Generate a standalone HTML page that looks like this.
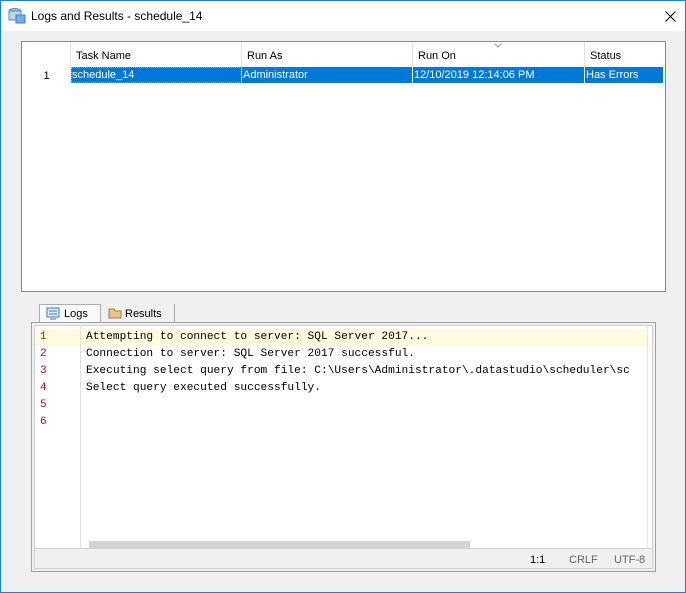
<!DOCTYPE html>
<html><head><style>
*{margin:0;padding:0;box-sizing:border-box}
body{width:686px;height:593px;background:#f0f0f0;font-family:"Liberation Sans",sans-serif;font-size:11px;position:relative;overflow:hidden}
.win{position:absolute;left:0;top:0;width:686px;height:593px;border:1px solid #1883d7;background:#f0f0f0}
.title{position:absolute;left:0;top:0;width:684px;height:30px;background:#fff}
.title span{position:absolute;left:30px;top:8px;font-size:12px;color:#000}
.abs{position:absolute}
.tbl{left:21px;top:41px;width:645px;height:251px;background:#fff;border:1px solid #828790}
.hc{position:absolute;top:0;height:25px;border-right:1px solid #e5e5e5;padding:8px 0 0 5px;color:#000}
.sel{position:absolute;top:25px;height:16px;background:#0078d7;color:#fff;padding:2px 0 0 1px;border-right:1px solid #fff}
.tab{position:absolute;top:304px;height:19px;padding:3px 0 0 24px;font-size:11px}
.ed{left:31px;top:322px;width:625px;height:250px;border:1px solid #a0a0a0;background:#f0f0f0}
.inner{position:absolute;left:2px;top:2px;width:619px;height:244px;background:#fff;border:1px solid #d0d0d0}
.gut{position:absolute;left:0;top:0;width:46px;height:222px;border-right:1px solid #e0e0e0}
.ln{position:absolute;left:5px;color:#a31515;font-family:"Liberation Mono",monospace;font-size:11px}
.cd{position:absolute;left:51px;font-family:"Liberation Mono",monospace;font-size:11.2px;color:#000;white-space:nowrap}
</style></head><body>
<div class="win">
<div class="title">
<svg class="abs" style="left:7px;top:7px" width="18" height="16"><ellipse cx="7" cy="3" rx="6" ry="2.5" fill="#9cc3e5" stroke="#5a8ab8"/><rect x="1" y="3" width="12" height="9" fill="#b9d6ef" stroke="#5a8ab8"/><rect x="8" y="7" width="9" height="8" fill="#6fb0e8" stroke="#3b7fc4"/></svg>
<span>Logs and Results - schedule_14</span>
<svg class="abs" style="left:664px;top:10px" width="11" height="11"><path d="M0.5 0.5L10.5 10.5M10.5 0.5L0.5 10.5" stroke="#000" stroke-width="1"/></svg>
</div>
</div>
<div class="abs tbl">
<div class="hc" style="left:0;width:49px"></div>
<div class="hc" style="left:49px;width:171px">Task Name</div>
<div class="hc" style="left:220px;width:171px">Run As</div>
<div class="hc" style="left:391px;width:172px">Run On</div>
<div class="hc" style="left:563px;width:80px;border-right:none">Status</div>
<svg class="abs" style="left:472px;top:1px" width="8" height="5"><path d="M0.5 0.5L4 4L7.5 0.5" stroke="#999" fill="none"/></svg>
<div class="abs" style="left:0;top:25px;width:49px;height:16px;text-align:center;padding-top:3px">1</div>
<div class="sel" style="left:49px;width:171px;outline:1px dotted #f0a040;outline-offset:-1px">schedule_14</div>
<div class="sel" style="left:220px;width:171px">Administrator</div>
<div class="sel" style="left:391px;width:172px">12/10/2019 12:14:06 PM</div>
<div class="sel" style="left:563px;width:78px;border-right:none">Has Errors</div>
</div>
<div class="tab" style="left:39px;width:62px;background:#f9f9f9;border:1px solid #acacac;border-bottom:none">Logs</div>
<svg class="abs" style="left:46px;top:307px" width="14" height="13"><rect x="1" y="1" width="12" height="9" fill="#dbe9f7" stroke="#3c7fc0"/><line x1="3" y1="4" x2="11" y2="4" stroke="#3c7fc0"/><line x1="3" y1="7" x2="11" y2="7" stroke="#3c7fc0"/><line x1="4" y1="12" x2="10" y2="12" stroke="#3c7fc0"/></svg>
<div class="tab" style="left:101px;width:74px;border-right:1px solid #acacac;padding-top:4px">Results</div>
<svg class="abs" style="left:108px;top:307px" width="14" height="12"><path d="M1 2h5l1 2h6v7H1z" fill="#e8c48c" stroke="#a77a3c"/></svg>
<div class="abs ed">
<div class="inner">
<div class="abs" style="left:0;top:3px;width:612px;height:17px;background:#fffbdf"></div>
<div class="gut"></div>
<div class="ln" style="top:5px">1</div><div class="ln" style="top:22px">2</div><div class="ln" style="top:39px">3</div><div class="ln" style="top:56px">4</div><div class="ln" style="top:73px">5</div><div class="ln" style="top:90px">6</div>
<div class="cd" style="top:5px">Attempting to connect to server: SQL Server 2017...</div>
<div class="cd" style="top:22px">Connection to server: SQL Server 2017 successful.</div>
<div class="cd" style="top:39px">Executing select query from file: C:\Users\Administrator\.datastudio\scheduler\sc</div>
<div class="cd" style="top:56px">Select query executed successfully.</div>
<div class="abs" style="left:612px;top:0;width:5px;height:222px;background:#fff;border-left:1px solid #e8e8e8"></div>
<div class="abs" style="left:54px;top:215px;width:381px;height:7px;background:#d4d4d4"></div>
<div class="abs" style="left:0;top:222px;width:617px;height:20px;background:#f0f0f0;border-top:1px solid #d0d0d0"></div>
<div class="abs" style="left:495px;top:228px;color:#000">1:1</div>
<div class="abs" style="left:534px;top:228px;color:#666">CRLF</div>
<div class="abs" style="left:579px;top:228px;color:#666">UTF-8</div>
</div>
</div>
</body></html>
